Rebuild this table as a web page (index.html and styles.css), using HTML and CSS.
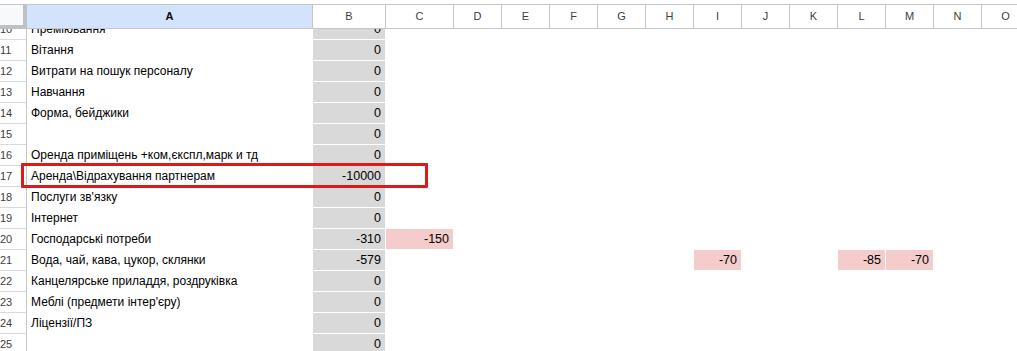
FILE: index.html
```html
<!DOCTYPE html>
<html lang="uk">
<head>
    <meta charset="UTF-8">
    <meta name="viewport" content="width=device-width, initial-scale=1.0">
    <title>Витрати</title>
    <link rel="stylesheet" href="styles.css">
</head>
<body>
    <div class="sheet">
        <div class="cols">
            <div class="head corner"></div>
            <div class="head selected">A</div>
            <div class="head">B</div>
            <div class="head">C</div>
            <div class="head">D</div>
            <div class="head">E</div>
            <div class="head">F</div>
            <div class="head">G</div>
            <div class="head">H</div>
            <div class="head">I</div>
            <div class="head">J</div>
            <div class="head">K</div>
            <div class="head">L</div>
            <div class="head">M</div>
            <div class="head">N</div>
            <div class="head">O</div>
        </div>

        <div class="grid">
            <div class="rows">
                <div class="row"><div class="rn">10</div><div class="txt">Преміювання</div><div class="num gray">0</div></div>
                <div class="row"><div class="rn">11</div><div class="txt">Вітання</div><div class="num gray">0</div></div>
                <div class="row"><div class="rn">12</div><div class="txt">Витрати на пошук персоналу</div><div class="num gray">0</div></div>
                <div class="row"><div class="rn">13</div><div class="txt">Навчання</div><div class="num gray">0</div></div>
                <div class="row"><div class="rn">14</div><div class="txt">Форма, бейджики</div><div class="num gray">0</div></div>
                <div class="row"><div class="rn">15</div><div class="txt"></div><div class="num gray">0</div></div>
                <div class="row"><div class="rn">16</div><div class="txt">Оренда приміщень +ком,єкспл,марк и тд</div><div class="num gray">0</div></div>
                <div class="row"><div class="rn">17</div><div class="txt">Аренда\Відрахування партнерам</div><div class="num gray">-10000</div></div>
                <div class="row"><div class="rn">18</div><div class="txt">Послуги зв'язку</div><div class="num gray">0</div></div>
                <div class="row"><div class="rn">19</div><div class="txt">Інтернет</div><div class="num gray">0</div></div>
                <div class="row">
                    <div class="rn">20</div><div class="txt">Господарські потреби</div><div class="num gray">-310</div>
                    <div class="num pink">-150</div>
                </div>
                <div class="row">
                    <div class="rn">21</div><div class="txt">Вода, чай, кава, цукор, склянки</div><div class="num gray">-579</div>
                    <div class="num pink col-i">-70</div>
                    <div class="num pink col-l">-85</div>
                    <div class="num pink col-m">-70</div>
                </div>
                <div class="row"><div class="rn">22</div><div class="txt">Канцелярське приладдя, роздруківка</div><div class="num gray">0</div></div>
                <div class="row"><div class="rn">23</div><div class="txt">Меблі (предмети інтер'єру)</div><div class="num gray">0</div></div>
                <div class="row"><div class="rn">24</div><div class="txt">Ліцензії/ПЗ</div><div class="num gray">0</div></div>
                <div class="row"><div class="rn">25</div><div class="txt"></div><div class="num gray">0</div></div>
            </div>
        </div>

        <!-- highlight around the partner row -->
        <div class="mark"></div>
    </div>
</body>
</html>
```

FILE: styles.css
```css
:root {
    --line: #c4c7c5;
    --row-line: #d9d9d9;
    --gray-fill: #d9d9d9;
    --pink-fill: #f4cccc;
    --selected: #d3e3fd;
    --mark: #dc1a1a;
}

* {
    box-sizing: border-box;
}

body {
    margin: 0;
    background: #ffffff;
    font-family: "Liberation Sans", Arial, sans-serif;
    color: #000000;
}

.sheet {
    position: relative;
    height: 351px;
    padding-top: 4px;
    overflow: hidden;
}

.cols,
.row {
    display: grid;
    grid-template-columns: 27px 286px 73px 68px repeat(12, 48px);
}

/* column letters */
.cols {
    border-top: 1px solid var(--line);
}

.head {
    height: 24px;
    line-height: 23px;
    border-right: 1px solid var(--line);
    border-bottom: 1px solid var(--line);
    font-size: 11px;
    color: #3c4043;
    text-align: center;
}

.head.selected {
    background: var(--selected);
    color: #0b0b0b;
    font-weight: bold;
}

.corner {
    background: #f8f9fa;
    border-right: 4px solid #bdc1c6;
    border-bottom: 4px solid #bdc1c6;
}

/* body rows */
.grid {
    height: 322px;
    overflow: hidden;
}

.rows {
    margin-top: -10px;
}

.row > div {
    height: 21px;
    line-height: 21px;
    white-space: nowrap;
    overflow: hidden;
}

.rn {
    border-right: 1px solid var(--line);
    border-bottom: 1px solid var(--row-line);
    padding-right: 15px;
    font-size: 11px;
    color: #3c4043;
    text-align: center;
}

.txt {
    padding-left: 4px;
    font-size: 12px;
}

.num {
    padding-right: 4px;
    font-size: 12.5px;
    text-align: right;
    border-right: 1px solid #ffffff;
    border-bottom: 1px solid #ffffff;
}

.gray {
    background: var(--gray-fill);
}

.pink {
    background: var(--pink-fill);
}

.col-i { grid-column: 10; }
.col-l { grid-column: 13; }
.col-m { grid-column: 14; }

.mark {
    position: absolute;
    left: 21px;
    top: 163px;
    width: 407px;
    height: 25px;
    border: 3px solid var(--mark);
    border-radius: 1px;
}
```
